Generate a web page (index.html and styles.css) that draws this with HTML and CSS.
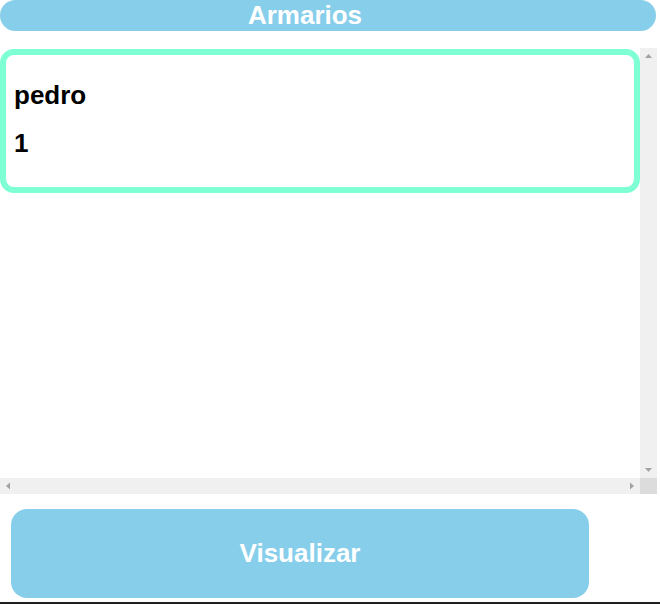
FILE: index.html
```html
<!DOCTYPE html>
<html lang="es">
<head>
<meta charset="utf-8">
<title>Armarios</title>
<link rel="stylesheet" href="styles.css">
</head>
<body>
<div class="page">
  <h1 class="title">Armarios</h1>
  <div class="list">
    <div class="viewport">
      <div class="card">
        <h2 class="line">pedro</h2>
        <h2 class="line">1</h2>
      </div>
    </div>
    <div class="vbar">
      <svg class="arrow" width="17" height="17" viewBox="0 0 17 17"><path d="M5 10 L12 10 L8.5 6 Z" fill="#a3a3a3"/></svg>
      <svg class="arrow" width="17" height="17" viewBox="0 0 17 17"><path d="M5 7 L12 7 L8.5 11 Z" fill="#a3a3a3"/></svg>
    </div>
    <div class="hbar">
      <svg class="arrow" width="17" height="16" viewBox="0 0 17 16"><path d="M10 4.5 L10 11.5 L6 8 Z" fill="#a3a3a3"/></svg>
      <svg class="arrow" width="17" height="16" viewBox="0 0 17 16"><path d="M7 4.5 L7 11.5 L11 8 Z" fill="#a3a3a3"/></svg>
    </div>
    <div class="corner"></div>
  </div>
  <div class="actions">
    <button class="btn">Visualizar</button>
  </div>
  <div class="strip"></div>
</div>
</body>
</html>
```
FILE: styles.css
```css
html, body {
  margin: 0;
  padding: 0;
  background: #ffffff;
  font-family: "Liberation Sans", Arial, sans-serif;
}
.page {
  width: 660px;
  height: 604px;
  display: flex;
  flex-direction: column;
  overflow: hidden;
}
.title {
  margin: 0;
  width: 656px;
  height: 31px;
  box-sizing: border-box;
  background: #87ceeb;
  border-radius: 16px;
  color: #ffffff;
  font-size: 26px;
  font-weight: bold;
  line-height: 31px;
  text-align: center;
  padding-right: 46px;
}
.list {
  margin-top: 17px;
  width: 657px;
  height: 446px;
  display: grid;
  grid-template-columns: 640px 17px;
  grid-template-rows: 430px 16px;
}
.viewport {
  overflow: hidden;
  padding-top: 1px;
}
.card {
  width: 640px;
  box-sizing: border-box;
  border: 6px solid #7fffd4;
  border-radius: 14px;
  padding: 25px 8px 29px 8px;
  display: flex;
  flex-direction: column;
  gap: 18px;
}
.line {
  font-size: 26px;
  font-weight: bold;
  color: #000000;
  margin: 0;
  line-height: 30px;
}
.vbar {
  background: #f0f0f0;
  display: flex;
  flex-direction: column;
  justify-content: space-between;
}
.hbar {
  background: #f0f0f0;
  display: flex;
  justify-content: space-between;
}
.arrow {
  display: block;
  flex: none;
}
.corner {
  background: #dcdcdc;
}
.actions {
  padding: 15px 0 0 11px;
}
.btn {
  display: block;
  width: 578px;
  height: 89px;
  border: none;
  border-radius: 16px;
  background: #87ceeb;
  color: #ffffff;
  font-family: "Liberation Sans", Arial, sans-serif;
  font-size: 26px;
  font-weight: bold;
  padding: 0;
}
.strip {
  margin-top: 4px;
  height: 3px;
  background: #1e1e1e;
}
```
